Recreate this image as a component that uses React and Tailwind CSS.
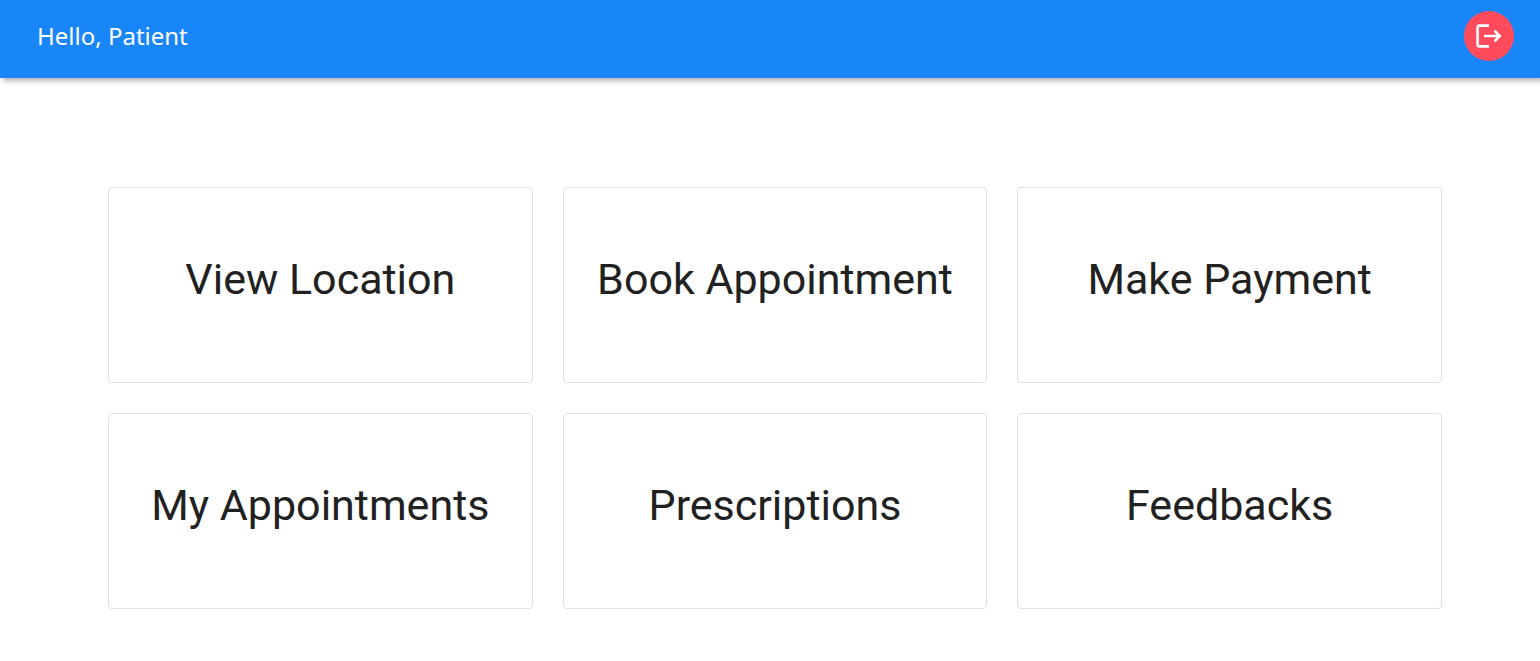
const cards = [
  "View Location",
  "Book Appointment",
  "Make Payment",
  "My Appointments",
  "Prescriptions",
  "Feedbacks",
];

export default function App() {
  return (
    <div className="min-h-screen bg-white">
      <header className="flex h-[78px] items-start justify-between bg-[#1885f9] pt-[11px] pr-[26px] pl-[37px] shadow-[3px_3px_5px_rgba(0,0,0,0.3)]">
        <h1 className="font-['Noto_Sans',sans-serif] text-2xl leading-[50px] text-white">Hello, Patient</h1>
        <button type="button" aria-label="Log out" className="flex size-[50px] items-center justify-center rounded-full bg-[#ff4b5c] text-white">
          <svg viewBox="0 0 26 24" className="h-6 w-[26px]" fill="none" stroke="currentColor" strokeWidth="2.600" aria-hidden="true">
            <path d="M13 1.600H3.200Q1.600 1.600 1.600 3.200V20.800Q1.600 22.400 3.200 22.400H13" />
            <path d="M8 12H24M18.500 6.700L23.800 12L18.500 17.300" />
          </svg>
        </button>
      </header>
      <main className="grid grid-cols-3 gap-[30px] pt-[109px] pr-[98px] pb-12 pl-[108px]">
        {cards.map((title) => (
          <a key={title} href="#" className="rounded border border-[#e0e0e0] px-5 pt-16 pb-[76px] text-center">
            <h2 className="font-[Roboto,sans-serif] text-[43px] leading-[54px] text-[#212121]">{title}</h2>
          </a>
        ))}
      </main>
    </div>
  );
}
